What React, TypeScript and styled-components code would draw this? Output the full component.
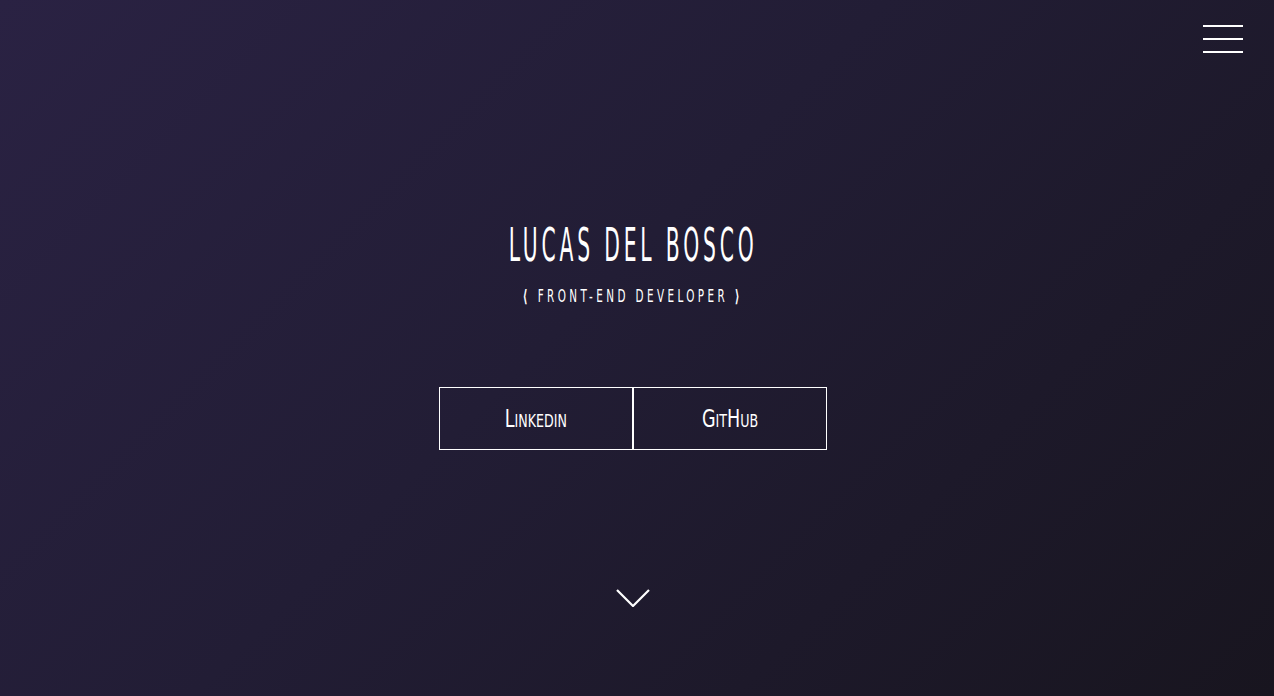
import React from "react";
import styled, { createGlobalStyle } from "styled-components";

const Global = createGlobalStyle`
  * { box-sizing: border-box; }
  html, body { margin: 0; padding: 0; }
  body {
    font-family: "DejaVu Sans Condensed", "DejaVu Sans", "Liberation Sans", sans-serif;
    color: #ffffff;
    background: #1c1829;
  }
`;

const Page = styled.div`
  height: 100vh;
  min-height: 696px;
  display: flex;
  flex-direction: column;
  align-items: center;
  padding-right: 8px;
  background: linear-gradient(135deg, #2a2243 0%, #221d35 45%, #18151f 100%);
  overflow: hidden;
`;

const NavBar = styled.nav`
  align-self: stretch;
  display: flex;
  justify-content: flex-end;
  padding: 25px 23px 0 0;
`;

const MenuButton = styled.button`
  width: 40px;
  height: 28px;
  padding: 0;
  border: 0;
  background: transparent;
  display: flex;
  flex-direction: column;
  justify-content: space-between;
  cursor: pointer;
`;

const MenuLine = styled.span`
  display: block;
  height: 2px;
  width: 100%;
  background: #ffffff;
`;

const Hero = styled.header`
  margin-top: 168px;
  display: flex;
  flex-direction: column;
  align-items: center;
`;

const Title = styled.h1`
  margin: 0;
  font-size: 47px;
  line-height: 1;
  font-weight: 400;
  letter-spacing: 8px;
  text-transform: uppercase;
  white-space: nowrap;
  transform: scaleX(0.48);
`;

const Subtitle = styled.h2`
  margin: 20px 0 0;
  font-size: 17px;
  line-height: 1;
  font-weight: 400;
  letter-spacing: 5px;
  text-transform: uppercase;
  white-space: nowrap;
  transform: scaleX(0.68);
`;

const Bracket = styled.span`
  font-weight: 700;
`;

const LinkRow = styled.div`
  margin-top: 82px;
  display: flex;
`;

const LinkButton = styled.a`
  width: 194px;
  height: 63px;
  display: flex;
  align-items: center;
  justify-content: center;
  border: 1px solid #ffffff;
  color: #ffffff;
  text-decoration: none;
  font-size: 25px;
  font-variant: small-caps;
`;

const LinkLabel = styled.span`
  display: inline-block;
  transform: scaleX(0.78);
`;

const ScrollDown = styled.a`
  margin-top: 139px;
  display: block;
  width: 34px;
  height: 18px;
`;

export default function App() {
  return (
    <>
      <Global />
      <Page>
        <NavBar>
          <MenuButton aria-label="Menu">
            <MenuLine />
            <MenuLine />
            <MenuLine />
          </MenuButton>
        </NavBar>
        <Hero>
          <Title>Lucas Del Bosco</Title>
          <Subtitle>
            <Bracket>⟨</Bracket> Front-end Developer <Bracket>⟩</Bracket>
          </Subtitle>
          <LinkRow>
            <LinkButton href="#">
              <LinkLabel>Linkedin</LinkLabel>
            </LinkButton>
            <LinkButton href="#">
              <LinkLabel>GitHub</LinkLabel>
            </LinkButton>
          </LinkRow>
        </Hero>
        <ScrollDown href="#" aria-label="Scroll down">
          <svg width="34" height="18" viewBox="0 0 34 18" fill="none">
            <polyline points="1,1 17,17 33,1" stroke="#ffffff" strokeWidth="2.2" />
          </svg>
        </ScrollDown>
      </Page>
    </>
  );
}
